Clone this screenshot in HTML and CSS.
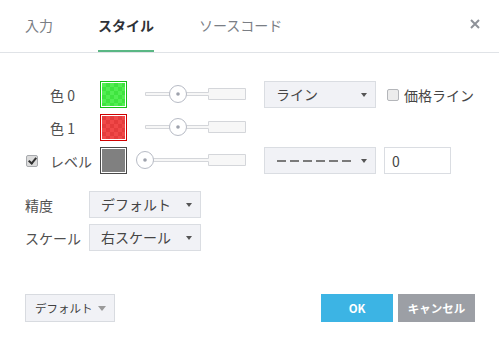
FILE: index.html
```html
<!DOCTYPE html>
<html lang="ja">

<head>
          <meta charset="UTF-8">
          <title>スタイル</title>
          <link rel="stylesheet" href="styles.css">
</head>

<body>
          <div class="dialog">
                    <div class="tabs">
                              <span class="tab">入力</span>
                              <span class="tab active">スタイル</span>
                              <span class="tab">ソースコード</span>
                              <svg class="close" width="10" height="10" viewBox="0 0 10 10">
                                        <path d="M1 1L9 9M9 1L1 9" stroke="#8e9299" stroke-width="2"/>
                              </svg>
                    </div>

                    <div class="content">
                              <div class="style-rows">
                                        <div class="row">
                                                  <span class="check-cell"></span>
                                                  <span class="label">色 0</span>
                                                  <span class="swatch green"></span>
                                                  <svg class="slider" width="110" height="27" viewBox="0 0 110 27">
                                                            <path d="M9.5 11.5H72.5V7.5H109.5V18.5H72.5V14.5H9.5Z" fill="#f7f7f7" stroke="#d4d6da"/>
                                                            <circle cx="42" cy="13" r="8.5" fill="#fff" stroke="#b7bbc5"/>
                                                            <circle cx="42" cy="13" r="1.8" fill="#9ea2ac"/>
                                                  </svg>
                                                  <div class="select wide">ライン<span class="arrow"></span></div>
                                                  <label class="check-label"><input type="checkbox" class="check">価格ライン</label>
                                        </div>
                                        <div class="row">
                                                  <span class="check-cell"></span>
                                                  <span class="label">色 1</span>
                                                  <span class="swatch red"></span>
                                                  <svg class="slider" width="110" height="27" viewBox="0 0 110 27">
                                                            <path d="M9.5 11.5H72.5V7.5H109.5V18.5H72.5V14.5H9.5Z" fill="#f7f7f7" stroke="#d4d6da"/>
                                                            <circle cx="42" cy="13" r="8.5" fill="#fff" stroke="#b7bbc5"/>
                                                            <circle cx="42" cy="13" r="1.8" fill="#9ea2ac"/>
                                                  </svg>
                                        </div>
                                        <div class="row">
                                                  <span class="check-cell"><input type="checkbox" class="check" checked></span>
                                                  <span class="label">レベル</span>
                                                  <span class="swatch gray"></span>
                                                  <svg class="slider" width="110" height="27" viewBox="0 0 110 27">
                                                            <path d="M9.5 11.5H72.5V7.5H109.5V18.5H72.5V14.5H9.5Z" fill="#f7f7f7" stroke="#d4d6da"/>
                                                            <circle cx="9" cy="13" r="8.5" fill="#fff" stroke="#b7bbc5"/>
                                                            <circle cx="9" cy="13" r="1.8" fill="#9ea2ac"/>
                                                  </svg>
                                                  <div class="select wide"><span class="dashes"></span><span class="arrow"></span></div>
                                                  <input type="text" class="number" value="0">
                                        </div>
                              </div>

                              <div class="option-rows">
                                        <div class="row">
                                                  <span class="opt-label">精度</span>
                                                  <div class="select wide">デフォルト<span class="arrow"></span></div>
                                        </div>
                                        <div class="row">
                                                  <span class="opt-label">スケール</span>
                                                  <div class="select wide">右スケール<span class="arrow"></span></div>
                                        </div>
                              </div>
                    </div>

                    <div class="footer">
                              <div class="preset">デフォルト<span class="arrow big"></span></div>
                              <div class="buttons">
                                        <button class="btn ok">OK</button>
                                        <button class="btn cancel">キャンセル</button>
                              </div>
                    </div>
          </div>
</body>

</html>
```

FILE: styles.css
```css
body {
          margin: 0;
          background: #fff;
          font-family: "Noto Sans CJK JP", "Noto Sans", sans-serif;
          color: #505050;
}

.dialog {
          width: 499px;
          height: 347px;
          background: #fff;
}

.tabs {
          display: flex;
          align-items: center;
          gap: 45px;
          height: 52px;
          padding-left: 25px;
          border-bottom: 1px solid #e0e3e7;
          position: relative;
}

.tab {
          font-size: 14px;
          color: #7a7e85;
          height: 52px;
          line-height: 50px;
          box-sizing: border-box;
}

.tab.active {
          color: #2f3238;
          font-weight: bold;
          border-bottom: 2px solid #5ab784;
}

.close {
          position: absolute;
          left: 470px;
          top: 19px;
}

.content {
          padding: 28px 0 0 25px;
}

.style-rows,
.option-rows {
          display: flex;
          flex-direction: column;
          gap: 6px;
}

.option-rows {
          margin-top: 17px;
}

.row {
          display: flex;
          align-items: center;
          height: 27px;
          font-size: 14px;
}

.check-cell {
          width: 25px;
          display: flex;
          align-items: center;
}

.label {
          width: 50px;
}

.opt-label {
          width: 64px;
}

.swatch {
          width: 27px;
          height: 27px;
          box-sizing: border-box;
          border: 1px solid;
          padding: 1px;
          background-clip: content-box;
}

.swatch.green {
          border-color: #14c014;
          background: repeating-conic-gradient(#3fe43f 0 25%, #52ee52 0 50%) content-box;
          background-size: 8px 8px;
}

.swatch.red {
          border-color: #d00000;
          background: repeating-conic-gradient(#f04848 0 25%, #e43c3c 0 50%) content-box;
          background-size: 8px 8px;
}

.swatch.gray {
          border-color: #4a4a4a;
          background: #808080 content-box;
}

.slider {
          margin-left: 9px;
          display: block;
}

.select {
          position: relative;
          box-sizing: border-box;
          height: 27px;
          line-height: 25px;
          padding-left: 11px;
          background: #f1f2f6;
          border: 1px solid #dadde2;
          color: #454545;
          font-size: 14px;
}

.style-rows .select {
          margin-left: 18px;
}

.select.wide {
          width: 112px;
}

.arrow {
          position: absolute;
          right: 8px;
          top: 11px;
          width: 0;
          height: 0;
          border-left: 3.5px solid transparent;
          border-right: 3.5px solid transparent;
          border-top: 4px solid #555;
}

.arrow.big {
          right: 8px;
          top: 11px;
          border-left-width: 4.5px;
          border-right-width: 4.5px;
          border-top-width: 5px;
          border-top-color: #9a9a9a;
}

.dashes {
          position: absolute;
          left: 12px;
          top: 12px;
          width: 75px;
          height: 2px;
          background: repeating-linear-gradient(90deg, #7a7a7a 0 9px, transparent 9px 13px);
}

.check {
          appearance: none;
          -webkit-appearance: none;
          width: 12px;
          height: 12px;
          margin: 0;
          box-sizing: border-box;
          border: 1px solid #b4b6ba;
          border-radius: 2px;
          background: #ececec;
          position: relative;
}

.check:checked {
          background: #dcdcdc;
          border-color: #a8aaae;
}

.check:checked::after {
          content: "";
          position: absolute;
          left: 3px;
          top: 0px;
          width: 3px;
          height: 6px;
          border: solid #333;
          border-width: 0 2px 2px 0;
          transform: rotate(40deg);
}

.check-cell .check {
          margin-left: 1px;
}

.check-label {
          display: flex;
          align-items: center;
          gap: 5px;
          margin-left: 11px;
          color: #454545;
}

.number {
          margin-left: 8px;
          width: 67px;
          height: 27px;
          box-sizing: border-box;
          border: 1px solid #dadde2;
          padding: 0 0 0 7px;
          font-family: inherit;
          font-size: 14px;
          color: #454545;
          outline: none;
}

.footer {
          display: flex;
          justify-content: space-between;
          align-items: center;
          padding: 43px 24px 0 25px;
}

.preset {
          position: relative;
          box-sizing: border-box;
          width: 90px;
          height: 28px;
          line-height: 26px;
          padding-left: 9px;
          font-size: 11.5px;
          color: #404040;
          background: #f1f2f6;
          border: 1px solid #d8dbe0;
}

.buttons {
          display: flex;
          gap: 5px;
}

.btn {
          height: 28px;
          border: none;
          color: #fff;
          font-family: inherit;
          font-size: 11.5px;
          font-weight: bold;
          padding: 0;
}

.btn.ok {
          width: 72px;
          background: #3cb4e4;
}

.btn.cancel {
          width: 77px;
          background: #9c9fa5;
}
```
